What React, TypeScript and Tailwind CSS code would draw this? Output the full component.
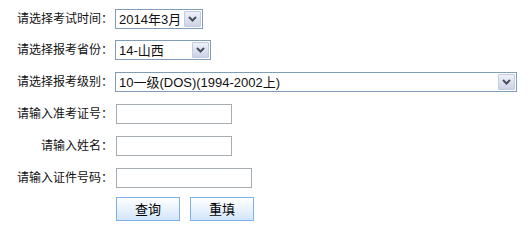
const labelCls =
  "w-[113px] shrink-0 text-right text-[12px] leading-none text-[#111]";
const fontStack = {
  fontFamily: '"Liberation Sans", "Noto Sans CJK SC", sans-serif',
};

function Chevron() {
  return (
    <svg width="9" height="6" viewBox="0 0 9 6" className="block">
      <polyline
        points="1,1 4.5,4.5 8,1"
        fill="none"
        stroke="#4a4d5a"
        strokeWidth="2"
      />
    </svg>
  );
}

function FakeSelect({ value, width }: { value: string; width: string }) {
  return (
    <div
      className={`ml-[2px] flex h-5 items-center justify-between border border-[#7f9db9] bg-white ${width}`}
    >
      <span className="pl-[3px] text-[13px] leading-none text-[#111]">
        {value}
      </span>
      <span className="mr-px flex h-4 w-[17px] items-center justify-center rounded-[1px] border border-[#c3cbe0] bg-gradient-to-b from-[#eef1fa] to-[#cdd3e6]">
        <Chevron />
      </span>
    </div>
  );
}

function TextBox({ width }: { width: string }) {
  return (
    <div className={`ml-[3px] h-5 border border-[#a5acb2] bg-white ${width}`} />
  );
}

function Btn({ children }: { children: string }) {
  return (
    <button
      type="button"
      className="flex h-6 w-16 items-center justify-center border border-[#7eb1ea] bg-gradient-to-b from-white to-[#d3e5fa] text-[13px] leading-none text-black"
    >
      {children}
    </button>
  );
}

export default function App() {
  return (
    <div className="h-[238px] w-[531px] bg-white pt-[9px]" style={fontStack}>
      <div className="flex h-5 items-center">
        <span className={labelCls}>请选择考试时间：</span>
        <FakeSelect value="2014年3月" width="w-[88px]" />
      </div>
      <div className="mt-[11px] flex h-5 items-center">
        <span className={labelCls}>请选择报考省份：</span>
        <FakeSelect value="14-山西" width="w-[96px]" />
      </div>
      <div className="mt-[12px] flex h-5 items-center">
        <span className={labelCls}>请选择报考级别：</span>
        <FakeSelect value="10一级(DOS)(1994-2002上)" width="w-[402px]" />
      </div>
      <div className="mt-[12px] flex h-5 items-center">
        <span className={labelCls}>请输入准考证号：</span>
        <TextBox width="w-[116px]" />
      </div>
      <div className="mt-[12px] flex h-5 items-center">
        <span className={labelCls}>请输入姓名：</span>
        <TextBox width="w-[116px]" />
      </div>
      <div className="mt-[12px] flex h-5 items-center">
        <span className={labelCls}>请输入证件号码：</span>
        <TextBox width="w-[136px]" />
      </div>
      <div className="mt-[9px] flex h-6 items-center gap-[10px] pl-[116px]">
        <Btn>查询</Btn>
        <Btn>重填</Btn>
      </div>
    </div>
  );
}
